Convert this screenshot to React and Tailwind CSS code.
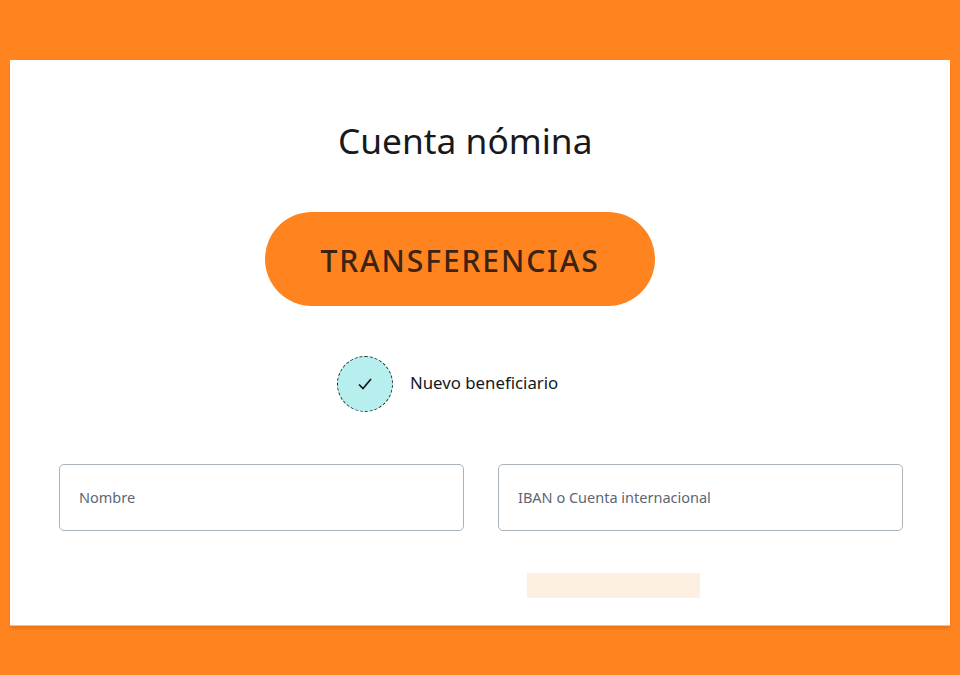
import React from 'react';

function Field({ label }) {
  return (
    <div className="w-[405px] h-[67px] flex items-center pl-[19px] border border-[#a9b2b9] rounded-[5px] bg-white">
      <span className="text-[14.5px] text-[#5d6675]">{label}</span>
    </div>
  );
}

function App() {
  return (
    <div className="w-[960px] h-[675px] bg-[#ff831e] pt-[60px] px-[10px] font-['Noto_Sans',sans-serif] overflow-hidden">
      <div className="w-[940px] h-[565px] bg-white flex flex-col shadow-[0_1px_0_#ffbb85,0_4px_2px_rgba(200,95,10,0.3)]">
        <h1 className="mt-[55px] ml-[328px] h-[50px] leading-[50px] text-[35.3px] text-[#17191c] font-normal">Cuenta nómina</h1>

        <div className="mt-[47px] ml-[255px] w-[390px] h-[94px] pt-[2px] rounded-full bg-[#ff831e] flex items-center justify-center">
          <span className="text-[30px] font-medium tracking-[1.9px] text-[#3b2413]">TRANSFERENCIAS</span>
        </div>

        <div className="mt-[50px] ml-[327px] flex items-center gap-[17px]">
          <div className="w-[56px] h-[56px] rounded-full bg-[#b7eeee] border border-dashed border-[#1c2a2c] flex items-center justify-center">
            <svg width="16" height="14" viewBox="0 0 16 14" fill="none" stroke="#14181c" strokeWidth="1.7">
              <path d="M2 7.5 L6 11.5 L14 2" />
            </svg>
          </div>
          <span className="text-[16.8px] leading-[24px] mb-[2px] text-[#14181c]">Nuevo beneficiario</span>
        </div>

        <div className="mt-[52px] ml-[49px] flex gap-[34px]">
          <Field label="Nombre" />
          <Field label="IBAN o Cuenta internacional" />
        </div>

        <div className="mt-[42px] ml-[517px] w-[173px] h-[25px] bg-[#fdf0e3]" />
      </div>
    </div>
  );
}

export default App;
